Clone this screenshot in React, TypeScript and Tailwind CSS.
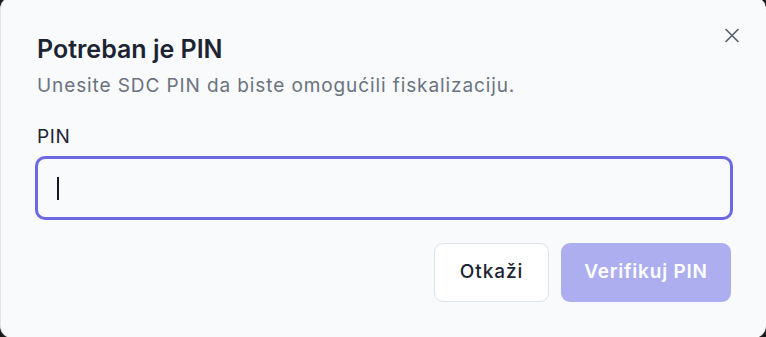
export default function App() {
  return (
    <div className="h-[337px] w-[766px] overflow-hidden bg-[#1a1a1a]">
      <div
        className="relative mt-[-3px] flex h-[341px] w-[766px] flex-col rounded-xl border-l border-[#e2e4e8] bg-[#f8fafc] px-[34px] pt-[37px]"
        style={{ fontFamily: "Inter, 'Noto Sans', sans-serif" }}
      >
        <h2 className="pl-[2px] text-[25px] font-semibold leading-[30px] text-[#1c2333]">Potreban je PIN</h2>
        <p className="mt-[9px] pl-[2px] text-[19px] leading-[26px] tracking-[0.9px] text-[#6b7280]">
          Unesite SDC PIN da biste omogućili fiskalizaciju.
        </p>

        <button type="button" className="absolute left-[724px] top-[31px] text-[#5b616c]">
          <svg width="14" height="15" viewBox="0 0 14 15" fill="none" stroke="currentColor" strokeWidth="1.7" strokeLinecap="round">
            <path d="M1 1.5 13 13.5M13 1.5 1 13.5" />
          </svg>
        </button>

        <label className="mt-[25px] pl-[2px] text-[19px] font-normal leading-[26px] tracking-[0.6px] text-[#1c2333]">PIN</label>
        <div className="mt-[6px] flex h-[64px] w-[698px] items-center rounded-[10px] border-[3px] border-[#6b68e2] bg-[#f8fafc] pl-[19px]">
          <span className="h-[23px] w-[2px] bg-[#111827]" />
        </div>

        <div className="mr-[1px] mt-[23px] flex justify-end gap-[12px]">
          <button
            type="button"
            className="h-[59px] w-[115px] rounded-[9px] border border-[#dfe2e7] bg-white text-[19px] font-medium tracking-[0.9px] text-[#1c2333]"
          >
            Otkaži
          </button>
          <button
            type="button"
            className="h-[59px] w-[170px] rounded-[9px] bg-[#adaef0] text-[19px] font-semibold tracking-[0.8px] text-white"
          >
            Verifikuj PIN
          </button>
        </div>
      </div>
    </div>
  );
}
